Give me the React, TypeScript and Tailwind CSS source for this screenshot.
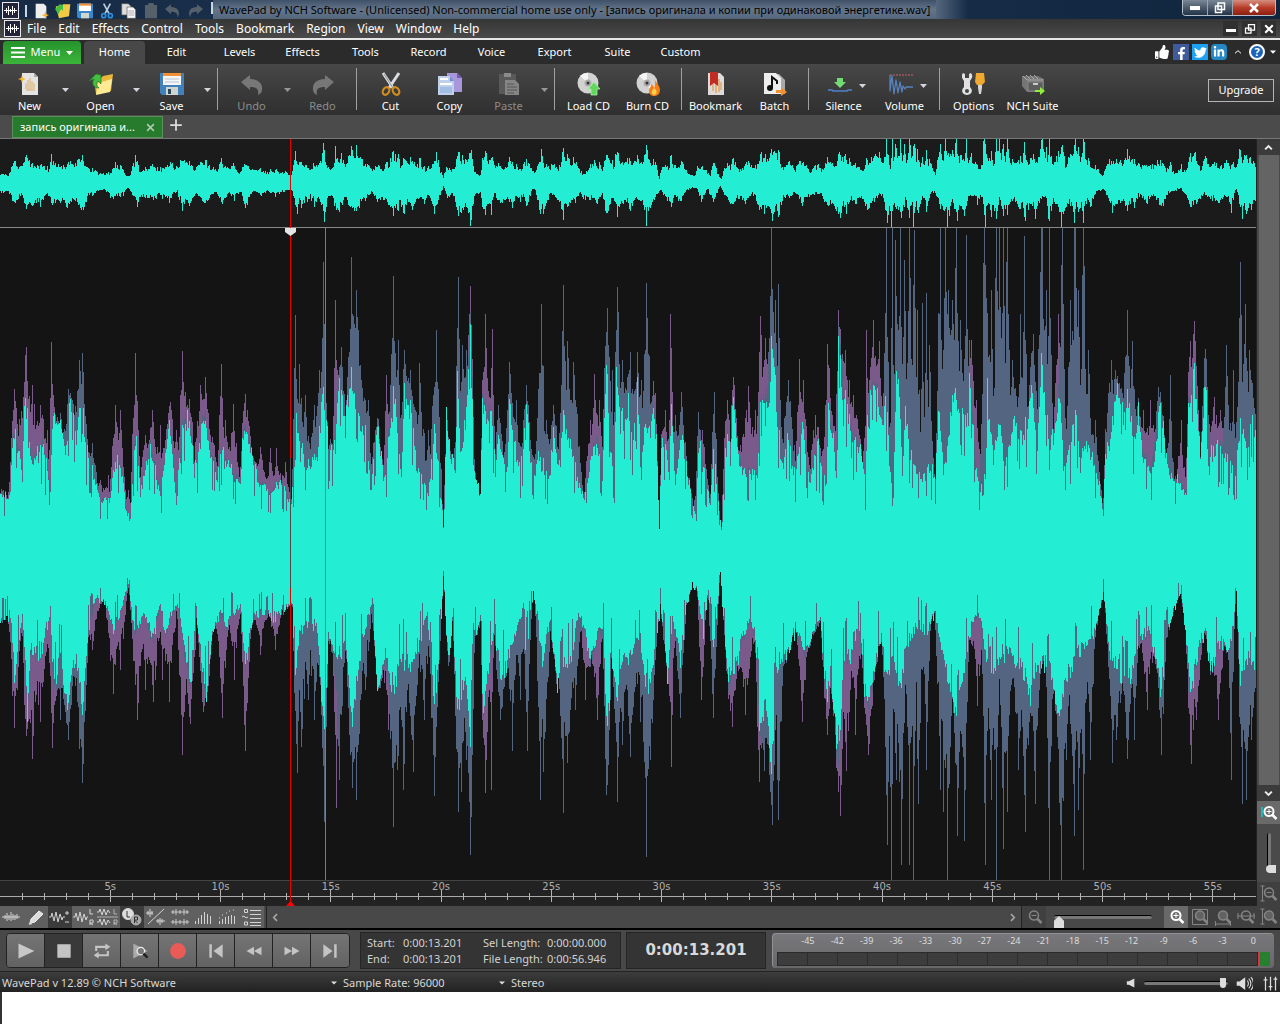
import React from "react";
import { FaFacebookF, FaTwitter, FaLinkedinIn, FaThumbsUp } from "react-icons/fa";

/* ---------- waveform data ---------- */

const WIDTH = 1256;
const TOP = 228;
const HEIGHT = 652;
const CENTER = 554;

// Shared level of both channels: "x,y" key points
const INNER_TOP =
  "0,490 10,495 12,433 16,432 22,470 25,380 28,433 33,458 42,437 50,488 52,412 60,413 65,450 70,393 76,430 82,385 84,432 90,460 100,497 109,500 115,460 120,462 126,510 130,520 134,440 136,426 140,490 150,440 160,495 169,413 176,500 182,417 190,417 194,470 204,406 208,440 216,470 222,448 232,470 240,480 243,421 250,440 258,480 270,490 280,480 291,498 294,470 296,410 300,445 310,465 318,440 323,373 328,440 335,440 339,366 345,420 351,363 358,410 367,430 370,490 377,415 384,480 393,372 396,415 401,475 404,384 408,395 413,420 416,460 420,465 428,490 434,414 437,450 443,525 446,413 450,450 455,470 457,358 460,450 465,420 470,316 474,470 480,495 482,398 487,410 492,412 495,470 498,419 503,455 507,460 509,395 514,440 520,465 527,401 530,450 534,470 538,448 545,468 548,480 553,430 560,465 562,391 566,430 573,450 578,480 583,500 590,455 597,430 602,470 606,353 610,440 614,470 616,362 620,420 628,400 632,440 637,383 641,440 645,415 650,430 652,401 655,405 659,530 661,430 665,435 669,480 671,400 675,480 681,425 687,470 696,520 698,435 702,460 710,500 713,440 716,480 721,530 724,460 727,425 730,450 733,385 738,455 745,470 757,470 760,395 765,392 769,395 771,330 774,364 778,430 783,460 787,435 795,475 801,420 810,480 817,440 825,480 827,400 833,430 836,470 838,330 842,370 848,410 853,432 860,445 865,480 867,410 870,390 875,370 882,420 885,385 892,500 897,335 902,470 905,395 908,435 915,460 920,475 930,460 935,480 938,400 945,460 954,378 960,410 968,415 969,370 977,480 983,490 987,375 993,450 1000,420 1005,460 1014,410 1020,430 1028,410 1031,373 1037,440 1041,350 1048,430 1055,425 1059,373 1063,460 1070,440 1075,400 1080,460 1085,430 1092,455 1100,485 1103,515 1105,450 1110,430 1117,385 1125,410 1127,390 1135,440 1138,400 1143,450 1150,470 1157,430 1160,395 1168,470 1178,480 1186,490 1188,400 1194,367 1200,455 1205,370 1210,450 1218,440 1228,455 1235,470 1240,415 1245,440 1252,410 1256,440";

const INNER_BOTTOM =
  "0,625 10,616 14,682 22,616 27,722 30,657 40,657 50,612 53,694 60,665 67,718 72,673 78,665 82,722 88,633 95,600 105,604 113,633 120,612 128,584 135,641 143,612 152,645 160,604 165,637 170,620 178,604 185,665 190,690 196,612 202,673 206,702 212,641 220,612 226,637 230,616 240,608 245,673 252,624 260,612 275,620 285,612 292,608 295,694 300,633 310,624 317,633 324,747 328,641 335,665 345,649 352,731 360,657 366,624 371,608 378,698 385,657 392,706 400,665 410,673 416,657 427,616 434,722 440,640 443,576 448,673 452,624 457,722 465,682 470,751 474,641 480,624 483,722 488,673 494,624 500,690 508,665 516,633 522,616 526,657 533,592 537,616 542,673 550,624 556,690 562,673 570,673 578,616 585,633 590,665 600,633 603,624 607,771 611,665 616,706 622,665 632,657 640,641 646,714 652,673 660,608 667,682 672,624 680,665 686,608 692,584 697,592 703,633 708,592 713,657 720,571 724,641 728,690 735,673 742,641 750,624 755,641 759,739 765,706 771,780 776,673 785,665 795,633 805,657 815,633 820,624 826,706 830,673 838,780 843,665 850,657 858,624 866,714 872,690 880,641 886,690 892,657 900,698 905,657 912,641 918,624 925,641 934,616 942,657 950,698 958,714 966,657 972,624 980,616 990,690 998,665 1010,657 1020,673 1030,698 1040,665 1050,673 1058,731 1065,690 1075,665 1085,649 1095,633 1103,592 1110,665 1118,673 1126,690 1133,673 1140,641 1150,633 1161,698 1166,641 1172,616 1180,592 1185,633 1190,702 1198,657 1205,633 1210,673 1220,641 1230,657 1236,592 1240,690 1248,665 1256,673";

// Parts where one channel is louder: "p|s,x,y,half width"
const PEAKS_TOP =
  "p,14,389,6 p,26,347,11 p,32,385,10 p,40,405,10 p,47,430,6 p,51,342,3 s,68,389,6 s,79,360,6 s,82,353,5 s,92,443,7 p,100,480,8 p,108,475,6 p,115,405,7 p,120,410,6 p,128,490,8 p,135,353,5 p,145,435,9 p,152,410,6 p,160,425,12 p,170,402,8 p,176,430,8 p,182,351,5 p,189,399,6 p,200,385,8 p,205,377,7 p,212,437,7 p,221,364,4 p,225,420,6 p,233,404,6 p,245,394,6 p,260,447,7 p,270,448,6 p,276,448,5 p,285,462,5 s,295,315,3 s,299,364,6 s,305,395,6 s,314,405,7 s,323,262,3 s,319,370,6 p,335,300,2 p,337,370,4 s,341,347,5 s,351,257,5 s,356,290,9 s,361,380,10 s,368,400,5 p,375,430,5 p,386,375,3 s,393,276,4 s,398,340,6 s,404,350,5 s,410,370,9 s,419,363,10 s,428,430,6 s,436,330,6 s,458,277,4 s,462,345,8 s,466,350,9 p,470,286,3 p,485,314,4 p,492,329,2 s,498,405,5 s,509,362,5 s,516,400,7 s,526,385,5 s,538,420,8 s,541,304,6 s,546,420,8 s,553,405,6 s,563,285,5 s,567,341,8 s,573,362,10 p,590,420,6 p,594,374,6 p,599,400,6 s,607,308,6 s,612,370,7 s,617,287,5 s,622,360,8 s,630,352,11 s,637,352,3 s,641,380,6 s,646,283,5 s,649,356,5 p,653,381,4 p,670,314,3 p,665,410,5 s,675,415,5 s,681,392,5 s,698,412,4 p,702,430,6 s,714,392,4 p,727,400,6 p,733,377,4 p,748,386,11 p,755,410,9 p,760,316,5 p,765,338,7 s,771,228,4 s,775,300,5 s,778,284,4 s,788,380,9 p,799,359,4 p,803,380,6 p,815,415,8 p,827,344,6 p,838,310,5 p,845,350,9 p,853,395,9 p,866,330,3 p,873,320,5 p,879,341,4 s,886,200,3 s,892,200,2 s,895,240,3 s,900,180,3 s,904,260,3 s,909,180,3 s,914,230,6 s,917,310,6 s,922,303,4 s,926,293,3 s,929,345,5 s,940,180,4 s,945,180,5 s,948,290,6 s,952,300,6 s,956,180,3 s,960,320,6 s,966,235,4 p,971,340,9 p,976,400,9 s,984,150,4 s,991,290,5 s,996,150,3 s,999,180,4 s,1003,210,5 s,1007,150,3 s,1012,360,8 s,1020,314,4 s,1024,236,3 s,1033,334,6 s,1041,150,4 s,1046,290,5 s,1049,200,3 p,1058,314,5 s,1062,200,4 s,1070,300,5 s,1075,100,4 s,1078,290,4 s,1083,150,3 s,1088,350,5 s,1095,420,6 s,1111,360,9 s,1115,370,9 s,1127,310,5 s,1132,341,6 p,1143,410,9 p,1150,400,9 s,1158,387,6 s,1170,375,3 p,1181,420,5 p,1190,341,5 p,1194,321,5 s,1205,349,4 p,1214,397,8 p,1220,410,7 s,1226,345,4 s,1233,370,6 s,1240,262,4 s,1245,304,6 s,1249,350,8";

const PEAKS_BOTTOM =
  "p,14,728,6 p,26,736,6 p,32,759,8 p,40,722,9 p,52,748,5 s,60,720,5 s,68,740,6 s,79,749,5 s,82,783,6 p,92,650,8 p,113,694,8 p,120,670,8 p,137,720,8 p,145,690,8 p,153,702,8 p,162,680,8 p,169,702,8 p,182,755,6 p,190,724,7 p,203,712,6 p,222,718,6 p,234,680,6 p,245,751,5 p,260,655,6 p,275,650,6 s,297,773,4 s,301,747,9 s,308,700,8 s,314,720,9 s,324,822,3 p,336,808,3 s,339,780,6 s,352,788,6 s,356,800,9 s,365,690,7 p,388,730,6 s,393,827,5 s,397,770,8 s,403,790,6 s,413,772,6 s,424,720,7 s,434,796,5 s,458,812,4 s,461,792,8 s,466,760,8 s,470,855,4 p,485,793,4 p,491,790,2 s,500,720,7 s,512,751,5 s,520,700,6 s,527,751,4 s,540,800,5 s,543,772,8 s,563,813,4 s,567,763,8 s,575,710,7 p,585,700,5 p,597,720,5 s,606,795,4 s,617,802,4 s,622,745,7 s,630,757,8 s,640,722,7 s,646,857,5 s,650,760,6 p,671,767,3 s,680,718,5 p,701,700,4 s,713,718,5 p,732,727,6 p,745,715,10 p,759,782,4 s,764,771,6 s,772,825,5 s,778,820,5 p,802,722,5 p,827,735,5 p,840,816,5 p,846,771,7 p,855,735,6 p,868,755,6 s,887,845,4 s,891,890,3 s,896,780,5 s,901,865,5 s,909,865,4 s,913,900,3 s,918,804,5 s,926,770,4 s,940,790,5 s,943,812,4 s,947,900,4 s,957,836,4 s,964,841,4 p,977,706,8 s,985,865,4 s,991,800,5 s,996,890,3 s,1003,849,4 s,1007,812,6 s,1018,770,6 s,1025,832,5 s,1035,804,5 s,1049,900,3 s,1061,920,4 s,1066,760,5 s,1074,836,6 s,1078,810,5 s,1083,870,4 s,1090,760,5 s,1112,763,6 s,1116,740,7 s,1127,759,4 s,1134,740,3 p,1147,710,7 s,1161,755,4 p,1191,764,5 p,1196,720,6 p,1218,720,6 s,1231,780,3 s,1242,804,5 s,1246,800,6 s,1251,740,6";

function makeNoise(seed: number) {
  let s = seed;
  return () => {
    s = (s * 1664525 + 1013904223) >>> 0;
    return s / 4294967296;
  };
}

function levels(points: string) {
  const keys = points.split(" ").map((p) => p.split(",").map(Number));
  const out: number[] = [];
  let k = 0;
  for (let x = 0; x < WIDTH; x++) {
    while (k < keys.length - 2 && keys[k + 1][0] <= x) k++;
    const [x0, y0] = keys[k];
    const [x1, y1] = keys[k + 1];
    out.push(Math.abs(y0 + ((y1 - y0) * (x - x0)) / (x1 - x0) - CENTER));
  }
  return out;
}

function channels(points: string, peaks: string, seed: number) {
  const noise = makeNoise(seed);
  const base = levels(points).map((h) => h * (0.92 + noise() * 0.12));
  const left = [...base];
  const right = [...base];
  peaks.split(" ").forEach((entry) => {
    const [kind, px, py, w] = entry.split(",");
    const target = kind === "p" ? left : right;
    const peak = Math.abs(Number(py) - CENTER);
    const half = Number(w);
    for (let x = Number(px) - half; x <= Number(px) + half; x++) {
      if (x < 0 || x >= WIDTH) continue;
      const d = Math.pow(1 - Math.abs(x - Number(px)) / (half + 1), 1.4);
      const rough = x === Number(px) ? 1 : 0.5 + noise() * 0.5;
      const h = base[x] + (peak - base[x]) * d * rough;
      if (h > target[x]) target[x] = h;
    }
  });
  const inner = base.map((h) => {
    const n = noise();
    return h - (n > 0.86 ? n * 46 : n * 18) * Math.min(1, h / 110) + 3;
  });
  return { inner, left, right };
}

function area(up: number[], down: number[], center: number, scale: number) {
  let d = `M0 ${center}`;
  for (let x = 0; x < WIDTH; x++) d += `V${Math.round(center - up[x] * scale)}H${x + 1}`;
  for (let x = WIDTH - 1; x >= 0; x--) d += `V${Math.round(center + down[x] * scale)}H${x}`;
  return d + "Z";
}

const upper = channels(INNER_TOP, PEAKS_TOP, 7);
const lower = channels(INNER_BOTTOM, PEAKS_BOTTOM, 99);
const C = CENTER - TOP;
const LEFT_PATH = area(upper.left, lower.left, C, 1);
const RIGHT_PATH = area(upper.right, lower.right, C, 1);
const INNER_PATH = area(upper.inner, lower.inner, C, 1);
const loud = (c: { left: number[]; right: number[] }, seed: number) => {
  const noise = makeNoise(seed);
  return c.left.map((v, i) => Math.max(v, c.right[i]) * (0.75 + noise() * 0.3) + 6);
};
const OVERVIEW_PATH = area(loud(upper, 3), loud(lower, 5), 44, 44 / 326);

/* ---------- small drawings ---------- */

const Svg = ({ size = 24, className = "", children }: { size?: number; className?: string; children: React.ReactNode }) => (
  <svg width={size} height={size} viewBox="0 0 24 24" fill="none" className={className} aria-hidden="true">
    {children}
  </svg>
);

const Caret = ({ className = "text-gray-300" }: { className?: string }) => (
  <svg width="7" height="4" viewBox="0 0 7 4" className={className} aria-hidden="true">
    <path d="M0 0h7L3.500 4z" fill="currentColor" />
  </svg>
);

const WaveLogo = () => (
  <svg width="17" height="17" viewBox="0 0 17 17" aria-hidden="true">
    <rect x=".5" y=".5" width="16" height="16" fill="#23233a" stroke="#e8e8ee" />
    <path d="M2 8.500h13M4.500 6v5M6.500 4v9M8.500 7v3M10.500 4v9M12.500 6v5" stroke="#fff" />
  </svg>
);

const page = "M4 1h12l4 4v18H4z";

const NewIcon = () => (
  <Svg>
    <path d={page} fill="#e4e4e4" />
    <path d="M16 1v4h4z" fill="#aaa" />
    <path d="M8 17V11M10 18V8M12 18V6M14 18V9M16 17v-6M8 18h9" stroke="#dfbf93" strokeWidth="1.500" />
    <path d="M4 3l1 3 3 1-3 1-1 3-1-3-3-1 3-1z" fill="#f5b52b" />
  </Svg>
);
const OpenIcon = () => (
  <Svg>
    <path d="M5 7l7-1 2-2 10-2-2 17-15 3z" fill="#e9b83a" />
    <path d="M9 11l14-4-2 13-14 3z" fill="#ffeb93" />
    <path d="M0 9l7-7 5 1v9l-3-3c-2 2-2 5 1 7-5 0-8-4-5-9z" fill="#43bd42" stroke="#217c28" strokeWidth=".7" />
  </Svg>
);
const SaveIcon = () => (
  <Svg>
    <path d="M0 1h24v22H2l-2-2z" fill="#4182bd" />
    <path d="M3 1h18v12H3z" fill="#f4f6f8" />
    <path d="M3 1h18v3H3z" fill="#f09135" />
    <path d="M5 7h14M5 10h14" stroke="#b9c3ca" />
    <path d="M6 15h12v8H6z" fill="#cfd5cf" />
    <path d="M8 17h3v5H8z" fill="#29475f" />
  </Svg>
);
const UndoIcon = ({ flip = false }: { flip?: boolean }) => (
  <Svg className={flip ? "-scale-x-100" : ""}>
    <path d="M1 10l9-7v4c9 0 13 5 12 11-.5 3-2 4-4 5 1-6-1-8-8-8v3z" fill="#777" />
  </Svg>
);
const CutIcon = () => (
  <Svg>
    <path d="M4 1l10 15M20 1L10 16" stroke="#d9dcdf" strokeWidth="3" />
    <path d="M5 2l9 14" stroke="#8a9095" strokeWidth="1" />
    <ellipse cx="7" cy="19" rx="3" ry="4" stroke="#cf8e1f" strokeWidth="2.200" transform="rotate(30 7 19)" />
    <ellipse cx="17" cy="19" rx="3" ry="4" stroke="#cf8e1f" strokeWidth="2.200" transform="rotate(-30 17 19)" />
  </Svg>
);
const CopyIcon = () => (
  <Svg>
    <path d="M9 1h10l5 5v14H9z" fill="#a997dc" />
    <path d="M19 1v5h5z" fill="#7359ba" />
    <path d="M0 4h12l4 5v14H0z" fill="#bfd0ed" />
    <path d="M12 4v5h4z" fill="#6e8ec7" />
    <path d="M2 7h8M2 12h12" stroke="#fff" strokeWidth="2" />
    <path d="M2 15h12v6H2z" fill="#a3bce2" />
  </Svg>
);
const PasteIcon = () => (
  <Svg>
    <path d="M2 2h17v20H2z" fill="#595959" />
    <path d="M7 1h7v4H7z" fill="#8a8a8a" />
    <path d="M8 8h10l4 4v11H8z" fill="#858585" />
    <path d="M10 12h7M10 15h10M10 18h10M10 21h7" stroke="#555" />
  </Svg>
);
const Disc = () => (
  <>
    <circle cx="11" cy="11" r="10.500" fill="#d2d2d2" />
    <path d="M11 11L3 4a10 10 0 018-3zM11 11l10 4a10 10 0 01-6 6z" fill="#f5f5f5" />
    <circle cx="11" cy="11" r="3.500" fill="#aaa" />
    <circle cx="11" cy="11" r="1.500" fill="#333" />
  </>
);
const LoadIcon = () => (
  <Svg>
    <Disc />
    <path d="M17 10l6 7h-3v6h-6v-6h-3z" fill="#62d55f" stroke="#a6f3a0" strokeWidth=".8" />
  </Svg>
);
const BurnIcon = () => (
  <Svg>
    <Disc />
    <path d="M18 6c1 4 6 7 6 12 0 8-11 8-11 1 0-4 3-4 2-7 2 1 3 2 3 4 2-3 1-7 0-10z" fill="#f57e18" />
    <path d="M18 23c-3-1-3-4 0-7 4 3 3 6 0 7z" fill="#ffd04b" />
  </Svg>
);
const BookmarkIcon = () => (
  <Svg>
    <path d={page} fill="#dedbd8" />
    <path d="M9 19v-7M12 21V9M15 20V7M17 18v-8" stroke="#e1a668" strokeWidth="1.500" />
    <path d="M6 0h8v14l-4-3-4 3z" fill="#c12d23" />
  </Svg>
);
const BatchIcon = () => (
  <Svg>
    <path d="M7 2h9l6 6v14H7z" fill="#a9a9a9" />
    <path d="M1 1h12l5 5v16H1z" fill="#ededed" />
    <path d="M9 16V5l5 4v3" stroke="#111" strokeWidth="2" />
    <circle cx="7" cy="16" r="3" fill="#111" />
    <path d="M13 18h5v-3l6 5-6 4v-3h-5z" fill="#f09132" />
  </Svg>
);
const SilenceIcon = () => (
  <Svg>
    <path d="M0 18h4l1 1h14l1-1h4" stroke="#4e84cd" strokeWidth="1.500" />
    <path d="M9 6h6v4h3l-6 6-6-6h3z" fill="#70db73" />
  </Svg>
);
const VolumeIcon = () => (
  <Svg>
    <path d="M1 3h23" stroke="#c96164" strokeDasharray="2 1" />
    <path d="M1 3v16l2-15 2 18 2-14 2 13 2-11 2 10 1-6 2 3 1-2h8" stroke="#5681bc" strokeWidth="1.300" strokeLinejoin="round" />
  </Svg>
);
const OptionsIcon = () => (
  <Svg>
    <path d="M1 1l2 1v4h4V2l2-1c3 4 0 6-1 8v6c4 4 1 8-3 8s-7-4-3-8V9C1 7-2 5 1 1z" fill="#dfe1e3" />
    <circle cx="5" cy="19" r="2" fill="#444" />
    <path d="M14 1h8l1 9-3 3h-5l-2-3z" fill="#efa92f" />
    <path d="M16 13h4v3l-1 6h-2l-1-6z" fill="#d5d5d5" />
  </Svg>
);
const SuiteIcon = () => (
  <Svg>
    <path d="M1 4h16l6 3v13H6l-5-6z" fill="#757575" />
    <path d="M2 4l4 4h16M5 3l4 4M9 3l4 4M13 3l4 4" stroke="#aaa" />
    <path d="M7 10h15v9H7z" fill="#5d5d5d" stroke="#888" />
    <path d="M12 12h5" stroke="#ccc" strokeWidth="2" />
    <path d="M14 18h5v-3l5 4-5 4v-3h-5z" fill="#92ee3e" />
  </Svg>
);

const PlusPage = () => (
  <Svg size={16}>
    <path d={page} fill="#eee" />
    <path d="M19 12l1 5 4 1-4 2-1 4-2-4-4-2 4-1z" fill="#f3b532" />
  </Svg>
);

/* ---------- ribbon ---------- */

type Item = { label?: string; icon?: React.ReactNode; drop?: boolean; inlineDrop?: boolean; off?: boolean; sep?: boolean };
const SEP: Item = { sep: true };

const RIBBON: Item[] = [
  { label: "New", icon: <NewIcon />, drop: true },
  { label: "Open", icon: <OpenIcon />, drop: true },
  { label: "Save", icon: <SaveIcon />, drop: true },
  SEP,
  { label: "Undo", icon: <UndoIcon />, drop: true, off: true },
  { label: "Redo", icon: <UndoIcon flip />, off: true },
  SEP,
  { label: "Cut", icon: <CutIcon /> },
  { label: "Copy", icon: <CopyIcon /> },
  { label: "Paste", icon: <PasteIcon />, drop: true, off: true },
  SEP,
  { label: "Load CD", icon: <LoadIcon /> },
  { label: "Burn CD", icon: <BurnIcon /> },
  SEP,
  { label: "Bookmark", icon: <BookmarkIcon /> },
  { label: "Batch", icon: <BatchIcon /> },
  SEP,
  { label: "Silence", icon: <SilenceIcon />, inlineDrop: true },
  { label: "Volume", icon: <VolumeIcon />, inlineDrop: true },
  SEP,
  { label: "Options", icon: <OptionsIcon /> },
  { label: "NCH Suite", icon: <SuiteIcon /> },
];

function RibbonItem({ item }: { item: Item }) {
  if (item.sep) return <span className="mx-1 mt-1 h-[42px] w-px shrink-0 bg-[#a0a0a0]" />;
  return (
    <div className="flex shrink-0">
      <button className={`relative flex flex-col items-center gap-1 whitespace-nowrap pt-2 text-[11px] leading-3 ${item.inlineDrop ? "w-[61px]" : "w-[59px]"} ${item.off ? "text-[#8c8c8c]" : "text-white"}`}>
        <span className={item.inlineDrop ? "mr-2" : ""}>{item.icon}</span>
        {item.label}
        {item.inlineDrop && <span className="absolute right-2 top-5"><Caret /></span>}
      </button>
      {item.drop && (
        <button aria-label={`${item.label} options`} className={`flex w-3 items-center justify-center ${item.off ? "opacity-60" : ""}`}>
          <Caret />
        </button>
      )}
    </div>
  );
}

/* ---------- wave tool strip ---------- */

const ToolSvg = ({ children }: { children: React.ReactNode }) => (
  <svg width="22" height="20" viewBox="0 0 22 20" fill="none" stroke="#d4d4d4" aria-hidden="true">{children}</svg>
);
const tiny = "M1 10h18M4 8v4M6 6v8M8 8v5M10 5v9M12 7v6M14 8v5M16 7v5";
const TOOLS: { name: string; on?: boolean; art: React.ReactNode }[] = [
  { name: "Waveform", art: <path d={tiny} /> },
  { name: "Pencil", art: <><path d="M5 16l1-4 8-8 4 3-8 8z" fill="#ddd" stroke="#eee" /><path d="M4 17l3-1" strokeWidth="2" /></> },
  { name: "Overlay waveform", on: true, art: <><path d="M0 10h2l1-4 2 8 2-9 2 10 2-8 2 6 1-3h2" /><path d="M16 6h4M18 4v4M16 15h4" /></> },
  { name: "Left and right", art: <><path d="M0 10h2l1-4 2 8 2-9 2 10 2-8 2 6 1-3h1" /><path d="M17 2v5h3M17 18v-5h3v3h-3l3 2" /></> },
  { name: "Separate channels", art: <><path d="M0 5h2l1-3 2 6 2-6 2 6 2-5 2 3M0 15h2l1-3 2 6 2-6 2 6 2-5 2 3" /><path d="M17 2v5h3M17 18v-5h3v3h-3l3 2M0 10h21" strokeWidth=".7" /></> },
  { name: "Channel focus", on: true, art: <><circle cx="7" cy="7" r="5.500" fill="#ddd" /><circle cx="15" cy="13" r="5" fill="#aaa" stroke="#aaa" /><path d="M6 4v6h3M13.500 16v-6h3v3h-3l3 3" stroke="#333" /></> },
  { name: "Split view", art: <path d="M1 6h7M3 4v4M5 2v8M7 4v4M3 17L19 2M11 14h9M13 12v4M15 11v7M17 12v4" /> },
  { name: "Dual view", art: <path d="M2 5h18M2 15h18M4 3v4M7 2v6M11 3v4M15 2v6M18 3v4M4 13v4M7 12v6M11 13v4M15 12v6M18 13v4" strokeWidth=".9" /> },
  { name: "Spectrum", art: <path d="M2.500 17v-3M5.500 17v-6M8.500 17V8M11.500 17V5M14.500 17V7M17.500 17V9" /> },
  { name: "Spectrum peaks", art: <><path d="M2.500 17v-3M5.500 17v-5M8.500 17v-7M11.500 17V9M14.500 17V8M17.500 17v-8" /><path d="M2 11h1M5 8h1M9 6h1M12 4h1M16 3h1" /></> },
  { name: "Spectral list", art: <><path d="M9 3.500h11M9 7.500h11M9 11.500h11M9 15.500h11M9 18.500h11" /><path d="M3.500 2.500h3v3h-3zM3.500 15h3v3h-3zM1 10l2-1 2 2 2-1" /></> },
];

const Magnifier = ({ kind, bright = false }: { kind: string; bright?: boolean }) => (
  <svg width="18" height="18" viewBox="0 0 18 18" fill="none" stroke={bright ? "#fff" : "#858585"} aria-hidden="true">
    {kind === "box" && <path d="M1.500 1.500h15v15h-15z" />}
    {kind === "vin" && <path d="M2 3v10" stroke="#22b5b5" strokeWidth="2" />}
    {(kind === "v" || kind === "vout") && <path d="M2.500 1v15M.500 1h4M.500 16h4" />}
    <circle cx="9" cy="7.500" r="4.500" strokeWidth={bright ? 2 : 1.500} fill={kind === "box" || kind === "w" || kind === "v" ? "#626262" : "none"} />
    <path d="M12.500 11l4 4" strokeWidth="2.500" />
    {(kind === "in" || kind === "vin") && <path d="M9 5v5M6.500 7.500h5" />}
    {(kind === "out" || kind === "vout") && <path d="M6.500 7.500h5" />}
    {kind === "w" && <path d="M1 16h16M1.500 13v5M16.500 13v5" />}
    {kind === "h" && <path d="M0 8h18M1 5v6M17 5v6" />}
  </svg>
);

const TRANSPORT: { name: string; on?: boolean; art: React.ReactNode }[] = [
  { name: "Play", art: <path d="M3 3l19 9-19 9z" fill="#c8c8c8" /> },
  { name: "Stop", on: true, art: <path d="M4 4h16v16H4z" fill="#c4c4c4" /> },
  { name: "Loop", art: <><path d="M5 12V7h12M19 12v5H7" stroke="#c4c4c4" strokeWidth="2.500" /><path d="M16 3l6 4-6 4zM8 13l-6 4 6 4z" fill="#c4c4c4" /></> },
  { name: "Scrub", art: <><path d="M4 3l17 9-17 9z" fill="#aaa" /><circle cx="13" cy="12" r="4.500" fill="#777" stroke="#eee" strokeWidth="1.500" /><path d="M16 15l5 5" stroke="#222" strokeWidth="3" /></> },
  { name: "Record", art: <circle cx="12" cy="12" r="9.500" fill="#e95b57" /> },
  { name: "Go to start", art: <path d="M4 4h3v16H4zM20 4v16L9 12z" fill="#c4c4c4" /> },
  { name: "Rewind", art: <path d="M12 7v10l-9-5zM21 7v10l-9-5z" fill="#c4c4c4" /> },
  { name: "Fast forward", art: <path d="M3 7v10l9-5zM12 7v10l9-5z" fill="#c4c4c4" /> },
  { name: "Go to end", art: <path d="M17 4h3v16h-3zM4 4v16l11-8z" fill="#c4c4c4" /> },
];

const METER = [-45, -42, -39, -36, -33, -30, -27, -24, -21, -18, -15, -12, -9, -6, -3, 0];

const RANGE =
  "appearance-none bg-transparent [&::-webkit-slider-runnable-track]:h-1 [&::-webkit-slider-runnable-track]:rounded [&::-webkit-slider-runnable-track]:border-t [&::-webkit-slider-runnable-track]:border-black [&::-webkit-slider-runnable-track]:bg-[#777] [&::-webkit-slider-thumb]:appearance-none [&::-webkit-slider-thumb]:bg-[#ddd]";

export default function App() {
  return (
    <div className="flex min-h-screen flex-col overflow-hidden bg-[#4a4a4a] font-['Noto_Sans','Open_Sans',sans-serif] text-white">
      {/* window title */}
      <header className="flex h-[19px] items-start bg-linear-to-r from-[#172b45] via-[#1b3351] to-[#10253d] pl-0.5">
        <div className="flex items-center gap-[6px] pt-0.5">
          <WaveLogo />
          <span className="h-3 w-0.5 bg-slate-300" />
          <PlusPage />
          <Svg size={16}><path d="M1 5h9l2-3h11l-2 18-15 3z" fill="#f1cb43" /><path d="M0 9l7-7 5 1v9l-3-3-4 8z" fill="#43bd42" /></Svg>
          <Svg size={16}><path d="M0 1h24v22H2l-2-2z" fill="#3b87cb" /><path d="M3 1h18v11H3z" fill="#fff" /><path d="M3 1h18v3H3z" fill="#f09135" /><path d="M6 15h12v8H6z" fill="#cfd5cf" /></Svg>
          <Svg size={16}><path d="M7 1l8 15M17 1L9 16" stroke="#b9cfdf" strokeWidth="2.500" /><circle cx="7" cy="19" r="3" stroke="#2b8fe0" strokeWidth="2.500" /><circle cx="17" cy="19" r="3" stroke="#2b8fe0" strokeWidth="2.500" /></Svg>
          <Svg size={16}><path d="M1 1h10l4 4v13H1z" fill="#ddd" stroke="#555" /><path d="M9 6h9l4 4v13H9z" fill="#f6f6f6" stroke="#555" /><path d="M11 12h9M11 15h9M11 18h9" stroke="#888" /></Svg>
          <Svg size={16}><path d="M3 3h18v20H3zM8 0h8v4H8z" fill="#56606b" /></Svg>
          <Svg size={16}><path d="M0 9l9-7v4c9 0 15 6 10 16 0-7-3-9-10-9v4z" fill="#56606b" /></Svg>
          <Svg size={16} className="-scale-x-100"><path d="M0 9l9-7v4c9 0 15 6 10 16 0-7-3-9-10-9v4z" fill="#56606b" /></Svg>
        </div>
        <span className="ml-2 mt-0.5 h-3 w-0.5 shrink-0 bg-slate-300" />
        <h1 className="min-w-0 truncate bg-linear-to-b from-[#3f5168] via-[#64758a] to-[#54677d] px-1.5 text-[11px] leading-[19px] text-black">
          WavePad by NCH Software - (Unlicensed) Non-commercial home use only - [запись оригинала и копии при одинаковой энергетике.wav]
        </h1>
        <span className="h-full w-8 bg-linear-to-r from-[#54677d] to-transparent" />
        <div className="ml-auto mr-1 flex h-4 shrink-0 overflow-hidden rounded-b border border-t-0 border-[#b4bec8]">
          <button aria-label="Minimize" className="flex w-[25px] items-center justify-center border-r border-[#9aa5b0] bg-linear-to-b from-[#7b8795] to-[#233447]"><span className="h-1 w-2.5 bg-white" /></button>
          <button aria-label="Restore" className="flex w-[25px] items-center justify-center border-r border-[#9aa5b0] bg-linear-to-b from-[#7b8795] to-[#233447]"><Svg size={12}><path d="M8 2h13v13H8zM3 8h12v13H3z" stroke="#fff" strokeWidth="3" /></Svg></button>
          <button aria-label="Close" className="flex w-[42px] items-center justify-center bg-linear-to-b from-[#d58d80] via-[#b83d28] to-[#8c1f12]"><Svg size={12}><path d="M4 4l16 16M20 4L4 20" stroke="#fff" strokeWidth="5" /></Svg></button>
        </div>
      </header>

      {/* menu bar */}
      <nav className="flex h-[21px] items-center border-b-2 border-[#e6e6e6] bg-linear-to-b from-[#363636] to-[#494949] pl-1 text-xs leading-4">
        <WaveLogo />
        <div className="ml-1.5 flex gap-3">
          {["File", "Edit", "Effects", "Control", "Tools", "Bookmark", "Region", "View", "Window", "Help"].map((m) => (
            <button key={m}>{m}</button>
          ))}
        </div>
        <div className="ml-auto flex gap-1 pr-1">
          <button aria-label="Minimize document" className="flex size-[15px] items-end justify-center bg-[#303030] pb-1"><span className="h-[3px] w-2.5 bg-white" /></button>
          <button aria-label="Restore document" className="flex size-[15px] items-center justify-center bg-[#303030]"><Svg size={12}><path d="M9 3h12v11H9zM3 10h11v10H3z" stroke="#fff" strokeWidth="2.500" /></Svg></button>
          <button aria-label="Close document" className="flex size-[15px] items-center justify-center bg-[#303030]"><Svg size={10}><path d="M3 3l18 18M21 3L3 21" stroke="#fff" strokeWidth="5" /></Svg></button>
        </div>
      </nav>

      {/* ribbon tabs */}
      <div className="flex h-6 items-end bg-[#2b2b2b] text-[11px]">
        <button className="ml-[3px] mr-[3px] flex h-[23px] w-[78px] items-center justify-center gap-1.5 rounded-t bg-linear-to-b from-[#25942c] to-[#3cb43a]">
          <svg width="14" height="11" viewBox="0 0 14 11" aria-hidden="true"><path d="M0 1h14M0 5.500h14M0 10h14" stroke="#fff" strokeWidth="2" /></svg>
          Menu <Caret className="text-white" />
        </button>
        <button className="h-[23px] w-[61px] rounded-t bg-[#484848]">Home</button>
        {["Edit", "Levels", "Effects", "Tools", "Record", "Voice", "Export", "Suite", "Custom"].map((t) => (
          <button key={t} className="h-[23px] w-[63px]">{t}</button>
        ))}
        <div className="mb-1 ml-auto flex items-center gap-[3px] pr-1">
          <button aria-label="Like" className="flex size-4 items-center justify-center"><FaThumbsUp size={14} /></button>
          <button aria-label="Facebook" className="flex size-4 items-end justify-center bg-[#3f5b9b]"><FaFacebookF size={13} /></button>
          <button aria-label="Twitter" className="flex size-4 items-center justify-center bg-[#1da1f2]"><FaTwitter size={13} /></button>
          <button aria-label="LinkedIn" className="flex size-4 items-center justify-center rounded-sm bg-[#2587c4]"><FaLinkedinIn size={12} /></button>
          <button aria-label="Collapse ribbon" className="flex w-4 justify-center"><Svg size={8}><path d="M3 16l9-8 9 8" stroke="#fff" strokeWidth="3" /></Svg></button>
          <button aria-label="Help" className="flex size-4 items-center justify-center rounded-full border-2 border-white bg-[#1d61ba] text-[11px] font-bold leading-3">?</button>
          <button aria-label="Help options" className="ml-0.5"><Svg size={6}><path d="M0 6h24L12 19z" fill="#fff" /></Svg></button>
        </div>
      </div>

      {/* ribbon */}
      <div className="flex h-[51px] bg-linear-to-b from-[#484848] to-[#2f2f2f]">
        {RIBBON.map((item, i) => <RibbonItem key={i} item={item} />)}
        <button className="ml-auto mr-1.5 mt-[15px] h-[23px] w-[66px] shrink-0 border border-[#b5b5b5] text-[11px]">Upgrade</button>
      </div>

      {/* document tabs */}
      <div className="flex h-6 items-end border-b border-[#777] bg-[#4b4b4b] text-[11px]">
        <div className="ml-3 flex h-[22px] w-[151px] items-center justify-between border border-[#5d8f5d] bg-[#267c2c] px-[7px]">
          <button>запись оригинала и...</button>
          <button aria-label="Close tab"><Svg size={9}><path d="M3 3l18 18M21 3L3 21" stroke="#b6c8b6" strokeWidth="4" /></Svg></button>
        </div>
        <button aria-label="New tab" className="mb-1.5 ml-1.5"><Svg size={14}><path d="M12 2v20M2 12h20" stroke="#ddd" strokeWidth="3" /></Svg></button>
      </div>

      <div className="flex flex-1">
        {/* wave display */}
        <main className="relative flex min-w-0 flex-1 flex-col bg-[#141414]">
          <div className="h-[88px] bg-[#1b1b1b]">
            <svg className="block size-full" viewBox={`0 0 ${WIDTH} 88`} preserveAspectRatio="none" shapeRendering="crispEdges" role="img" aria-label="Overview waveform">
              <path d={OVERVIEW_PATH} fill="#23edd2" />
            </svg>
          </div>
          <div className="flex min-h-80 flex-1 flex-col border-t border-[#888]">
            <svg className="block h-0 w-full flex-1" viewBox={`0 0 ${WIDTH} ${HEIGHT}`} preserveAspectRatio="none" shapeRendering="crispEdges" role="img" aria-label="Stereo waveform">
              <path d={LEFT_PATH} fill="#7a598b" />
              <path d={RIGHT_PATH} fill="#536580" />
              <path d={INNER_PATH} fill="#23edd2" />
              <rect x="325" width="1" height="652" fill="#777f80" />
            </svg>
          </div>
          <div className="h-[26px] border-t border-[#444] bg-[#222]">
            <svg className="block size-full" shapeRendering="crispEdges" role="img" aria-label="Time ruler">
              <line x1="0" x2="100%" y1="15" y2="15" stroke="#aaa" />
              {Array.from({ length: 56 }, (_, i) => i + 1).map((s) => (
                <line key={s} x1={`${(s * 22.05 * 100) / WIDTH}%`} x2={`${(s * 22.05 * 100) / WIDTH}%`} y1={s % 5 ? 12 : 9} y2={s % 5 ? 19 : 21} stroke="#b5b5b5" />
              ))}
              {Array.from({ length: 11 }, (_, i) => (i + 1) * 5).map((s) => (
                <text key={s} x={`${(s * 22.05 * 100) / WIDTH}%`} y="9" textAnchor="middle" fill="#b0b0b0" fontSize="10" fontFamily="DejaVu Sans, sans-serif">{s}s</text>
              ))}
            </svg>
          </div>
          {/* playback cursor */}
          <div className="absolute inset-y-0 left-0 flex w-[291px] flex-col items-end">
            <span className="w-px flex-1 bg-[#e60000]" />
            <span className="h-[130px] w-px bg-[#50484a]" />
            <span className="w-px flex-1 bg-[#e60000]" />
          </div>
          <svg className="absolute left-[285px] top-[89px]" width="11" height="8" viewBox="0 0 11 8" aria-hidden="true"><path d="M0 0h11v4L5.500 8 0 4z" fill="#e5e5e5" /></svg>
          <svg className="absolute bottom-0 left-[286px]" width="9" height="5" viewBox="0 0 9 5" aria-hidden="true"><path d="M0 5l4.500-5L9 5z" fill="red" /></svg>
        </main>

        {/* vertical scroll and zoom */}
        <aside className="flex w-6 flex-col items-center border-l border-[#222] bg-[#4a4a4a]">
          <button aria-label="Scroll up" className="flex h-4 w-full items-center justify-center bg-[#3b3b3b]"><Svg size={9}><path d="M3 17l9-9 9 9" stroke="#eee" strokeWidth="5" /></Svg></button>
          <div className="w-5 flex-1 bg-[#646464]" />
          <button aria-label="Scroll down" className="flex h-4 w-full items-center justify-center bg-[#3b3b3b]"><Svg size={9}><path d="M3 7l9 9 9-9" stroke="#eee" strokeWidth="5" /></Svg></button>
          <button aria-label="Vertical zoom in" className="flex h-[23px] w-full items-center justify-center bg-[#6a6a6a]"><Magnifier kind="vin" bright /></button>
          <div className="flex h-[58px] items-center justify-center">
            <input aria-label="Vertical zoom" type="range" defaultValue="0" className={`w-10 -rotate-90 [&::-webkit-slider-thumb]:-mt-0.5 [&::-webkit-slider-thumb]:h-2.5 [&::-webkit-slider-thumb]:w-2 [&::-webkit-slider-thumb]:rounded-t-full ${RANGE}`} />
          </div>
          <button aria-label="Vertical zoom out" className="flex h-6 w-full items-center justify-center bg-[#404040]"><Magnifier kind="vout" /></button>
        </aside>
      </div>

      {/* tool strip */}
      <div className="flex h-6 border-b-2 border-black bg-[#484848]">
        <div className="flex">
          {TOOLS.map((t) => (
            <button key={t.name} aria-label={t.name} aria-pressed={!!t.on} className={`flex w-6 items-center justify-center ${t.on ? "bg-[#3b3b3b]" : "bg-[#606060]"}`}>
              <ToolSvg>{t.art}</ToolSvg>
            </button>
          ))}
        </div>
        <div className="ml-0.5 flex flex-1 items-center justify-between border-x border-[#222] px-1">
          <button aria-label="Scroll left"><Svg size={9}><path d="M16 3l-9 9 9 9" stroke="#aaa" strokeWidth="4" /></Svg></button>
          <button aria-label="Scroll right"><Svg size={9}><path d="M8 3l9 9-9 9" stroke="#aaa" strokeWidth="4" /></Svg></button>
        </div>
        <button aria-label="Zoom out" className="flex w-6 items-center justify-center bg-[#404040]"><Magnifier kind="out" /></button>
        <input aria-label="Zoom" type="range" defaultValue="0" className={`ml-2 mr-3 w-[98px] [&::-webkit-slider-thumb]:h-3 [&::-webkit-slider-thumb]:w-2.5 [&::-webkit-slider-thumb]:[clip-path:polygon(50%_0,100%_40%,100%_100%,0_100%,0_40%)] ${RANGE}`} />
        <button aria-label="Zoom in" className="flex w-6 items-center justify-center bg-[#696969]"><Magnifier kind="in" bright /></button>
        {["box", "w", "h", "v"].map((k) => (
          <button key={k} aria-label={`Zoom ${k}`} className="flex w-[23px] items-center justify-center bg-[#404040]"><Magnifier kind={k} /></button>
        ))}
      </div>

      {/* transport */}
      <section className="flex h-[42px] items-center border-b border-[#222] bg-[#484848] pl-1.5">
        <div className="flex h-[35px] divide-x divide-[#222] overflow-hidden rounded border border-[#222]">
          {TRANSPORT.map((t) => (
            <button key={t.name} aria-label={t.name} className={`flex w-[38px] items-center justify-center ${t.on ? "bg-[#393939]" : "bg-linear-to-b from-[#747474] via-[#6c6c6c] to-[#626262]"}`}>
              <Svg size={20}>{t.art}</Svg>
            </button>
          ))}
        </div>
        <dl className="ml-2.5 grid h-[37px] w-[261px] shrink-0 grid-cols-[36px_80px_64px_auto] content-center border border-[#252525] bg-[#343434] px-1.5 text-[11px] leading-4 text-[#d2d2d2]">
          <dt>Start:</dt><dd>0:00:13.201</dd>
          <dt>Sel Length:</dt><dd>0:00:00.000</dd>
          <dt>End:</dt><dd>0:00:13.201</dd>
          <dt>File Length:</dt><dd>0:00:56.946</dd>
        </dl>
        <output className="ml-[5px] flex h-[37px] w-[140px] shrink-0 items-center justify-center border border-[#252525] bg-[#343434] font-['DejaVu_Sans',sans-serif] text-[15px] font-bold text-[#d9d9d9]">
          0:00:13.201
        </output>
        <div className="ml-1.5 mr-1.5 flex h-[35px] min-w-0 flex-1 flex-col rounded-sm border-l border-t border-[#929296] bg-linear-to-b from-[#78787c] to-[#68686a] px-1">
          <div className="flex h-[18px] pl-2 pr-1.5 text-[9px] leading-[14px] text-[#ddd]">
            {METER.map((m) => (
              <span key={m} className={`flex-1 text-right ${m === 0 ? "pr-2" : ""}`}>{m}</span>
            ))}
          </div>
          <div className="flex h-3.5">
            <div className="flex flex-1 divide-x divide-[#2c2c2c] border border-[#2a2a2a] bg-[#3d3d3d]">
              {METER.map((m) => <span key={m} className="flex-1" />)}
            </div>
            <span className="w-0.5 bg-[#d9344b]" />
            <span className="w-2.5 bg-[#27802f]" />
          </div>
        </div>
      </section>

      {/* status bar */}
      <footer className="flex h-5 items-center bg-linear-to-b from-[#3d3d3d] to-[#222] px-0.5 pt-0.5 text-[11px] leading-4 text-[#d8d8d8]">
        <span className="w-[329px]">WavePad v 12.89 © NCH Software</span>
        <button className="flex w-[168px] items-center gap-1.5"><Svg size={6}><path d="M0 6h24L12 18z" fill="#ddd" /></Svg>Sample Rate: 96000</button>
        <button className="flex items-center gap-1.5"><Svg size={6}><path d="M0 6h24L12 18z" fill="#ddd" /></Svg>Stereo</button>
        <div className="ml-auto flex items-center gap-2">
          <Svg size={10}><path d="M2 8h5L20 1v22L7 16H2z" fill="#ddd" /></Svg>
          <input aria-label="Volume" type="range" defaultValue="98" className={`w-[84px] [&::-webkit-slider-thumb]:-mt-1 [&::-webkit-slider-thumb]:h-2.5 [&::-webkit-slider-thumb]:w-1.5 [&::-webkit-slider-thumb]:rounded-b-full ${RANGE}`} />
          <Svg size={17}><path d="M1 9h4l8-6v18l-8-6H1z" fill="#ddd" /><path d="M16 8c2 2 2 6 0 8M18 5c4 4 4 10 0 14M21 3c5 5 5 13 0 18" stroke="#ddd" strokeWidth="1.500" /></Svg>
          <button aria-label="Mixer" className="ml-0.5"><Svg size={15}><path d="M4 1v22M12 1v22M20 1v22M1 6h6M9 17h6M17 5h6" stroke="#ddd" strokeWidth="2" /></Svg></button>
        </div>
      </footer>
      <div className="h-8 border-l-2 border-[#333] bg-white" />
    </div>
  );
}
